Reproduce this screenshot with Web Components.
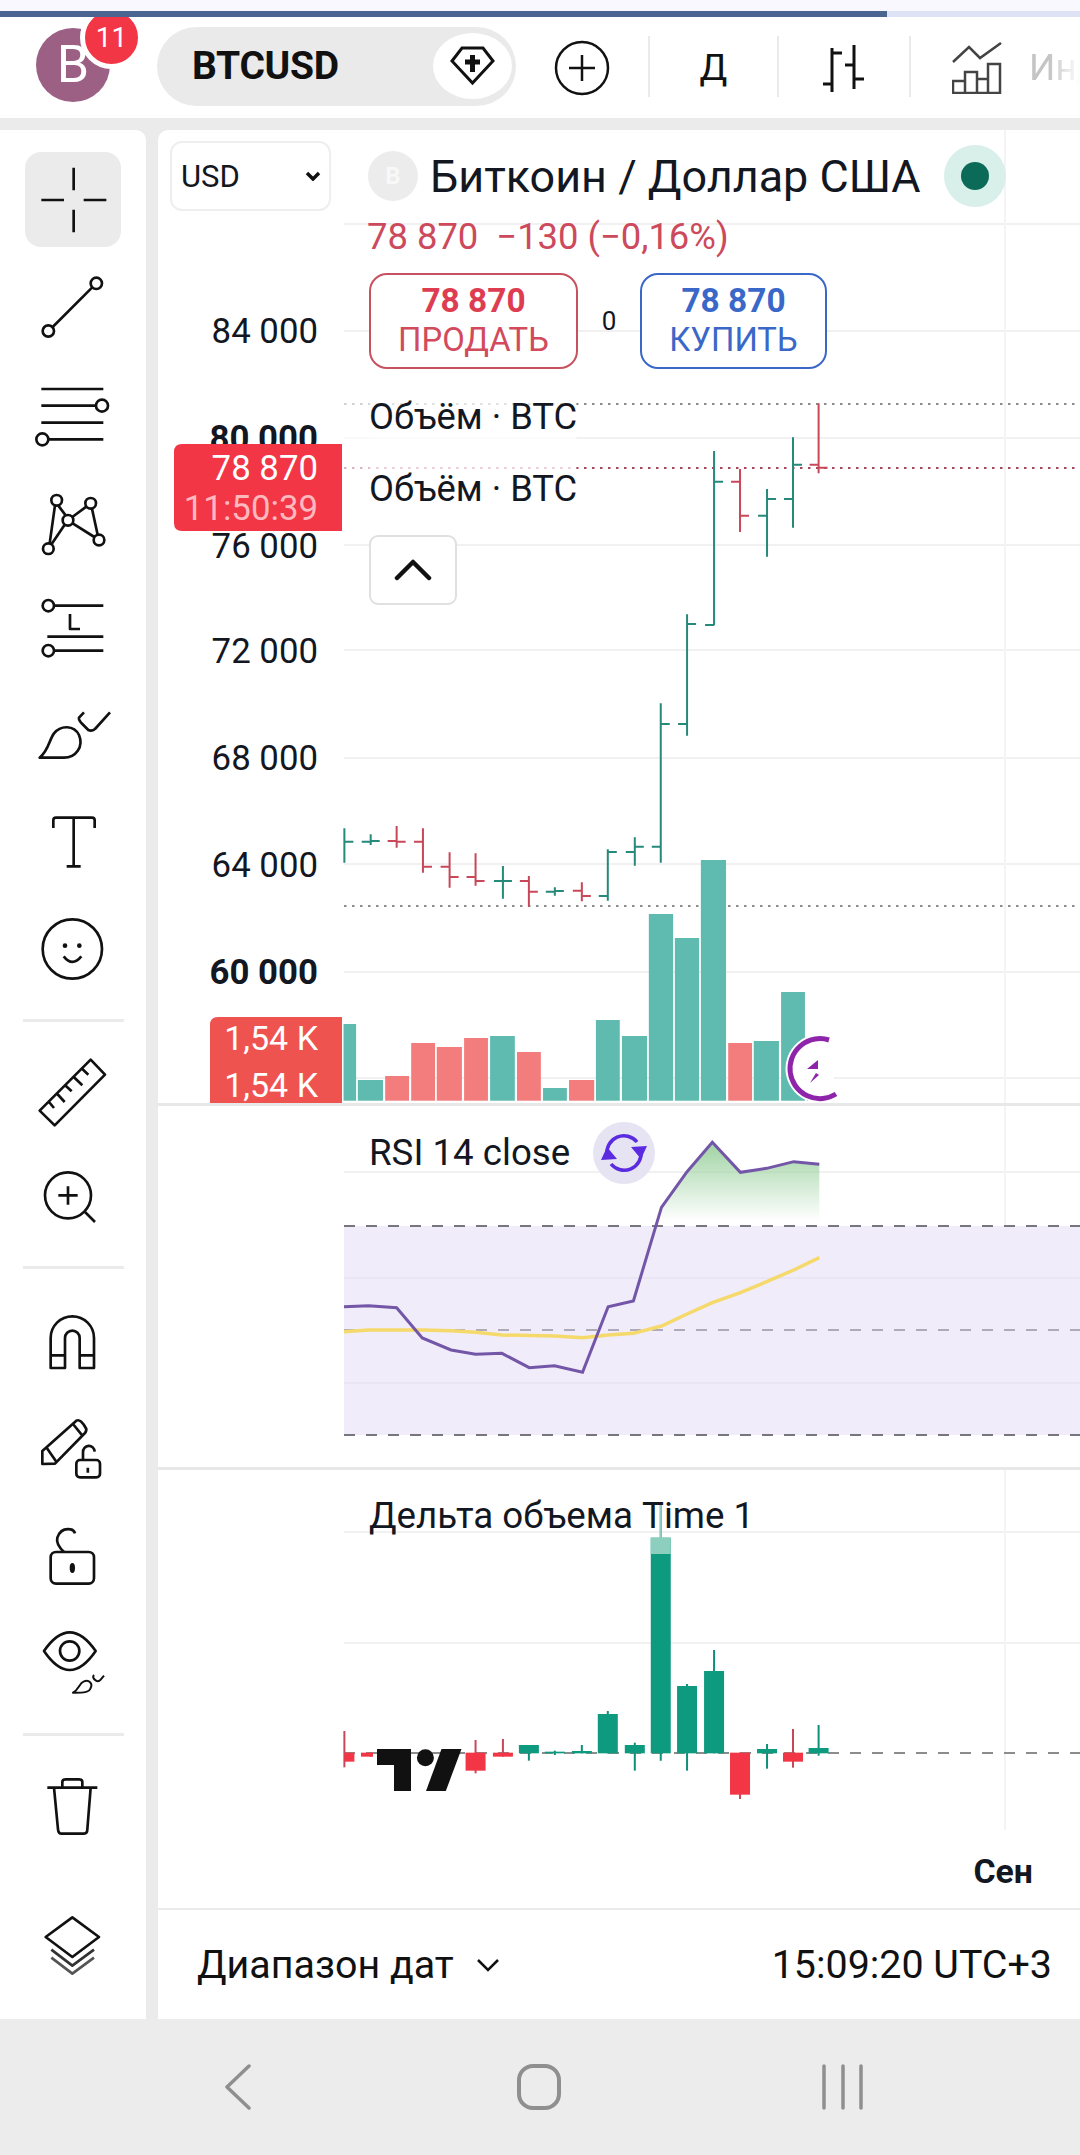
<!DOCTYPE html>
<html lang="ru">
<head>
<meta charset="utf-8">
<title>BTCUSD</title>
<style>
    html, body { margin: 0; padding: 0; background: #ebebeb; }
    body { width: 1080px; height: 2155px; overflow: hidden; font-family: Roboto, "Liberation Sans", sans-serif; color: #131722; }
</style>
</head>
<body>

<template id="tv-header-template">
    <style>
        :host { display: block; background: #fff; }
        .status { height: 11px; background: #f8f8fe; }
        .progress { height: 6px; background: #dde3f5; position: relative; z-index: 2; }
        .progress div { width: 887px; height: 100%; background: #4a6590; }
        .bar { height: 101px; display: flex; align-items: center; padding-left: 36px; overflow: hidden; position: relative; }
        .avatar { width: 74px; height: 74px; border-radius: 50%; background: #9c6085; color: #fff; font-size: 52px; font-weight: 400; display: flex; align-items: center; justify-content: center; margin-top: -6px; box-sizing: border-box; flex: none; }
        .badge { position: absolute; left: 81px; top: -10px; width: 53px; height: 53px; border-radius: 50%; background: #f23645; border: 5px solid #fff; color: #fff; font-size: 28px; display: flex; align-items: center; justify-content: center; box-sizing: content-box; margin: -1px; }
        .pill { width: 359px; height: 79px; margin-left: 47px; margin-top: -3px; border-radius: 40px; background: #eaeaea; display: flex; align-items: center; justify-content: space-between; padding: 0 4px 0 35px; box-sizing: border-box; flex: none; }
        .pill b { font-size: 39px; font-weight: 700; color: #111; letter-spacing: -.3px; }
        .gem { width: 79px; height: 66px; border-radius: 50%; background: #fff; display: flex; align-items: center; justify-content: center; }
        .plus { margin-left: 38px; flex: none; }
        .sep { width: 2px; height: 61px; background: #eaeaea; flex: none; margin-top: -2px; }
        .cell { display: flex; align-items: center; justify-content: center; flex: none; height: 100%; }
        .interval { font-size: 37px; font-weight: 400; color: #111; width: 127px; }
        .bars { width: 130px; }
        .ind { margin-left: 41px; flex: none; }
        .label { margin-left: 27px; font-size: 37px; white-space: nowrap; color: #c4c4c4; -webkit-mask-image: linear-gradient(90deg, #000 20px, transparent 51px); mask-image: linear-gradient(90deg, #000 20px, transparent 51px); width: 51px; overflow: hidden; flex: none; }
    </style>
    <div class="status"></div>
    <div class="progress"><div></div></div>
    <div class="bar">
        <div class="avatar">B</div>
        <div class="badge">11</div>
        <div class="pill">
            <b>BTCUSD</b>
            <div class="gem">
                <svg width="50" height="42" viewBox="0 0 50 42" fill="none" stroke="#111" stroke-width="3"><path d="M14 3H35L45 16 24.500 38 4 16Z"/><path d="M24.500 10V27M17 17H32" stroke-width="5"/></svg>
            </div>
        </div>
        <svg class="plus" width="56" height="56" viewBox="0 0 56 56" fill="none" stroke="#111" stroke-width="2.500"><circle cx="28" cy="28" r="26"/><path d="M28 15V41M15 28H41"/></svg>
        <div class="sep" style="margin-left:38px"></div>
        <div class="cell interval">Д</div>
        <div class="sep"></div>
        <div class="cell bars">
            <svg width="46" height="50" viewBox="0 0 46 50" fill="none" stroke="#111" stroke-width="3"><path d="M11 5V49M11 10H21M11 41H2M33 2V46M33 22H24M33 36H43"/></svg>
        </div>
        <div class="sep"></div>
        <svg class="ind" width="50" height="52" viewBox="0 0 50 52" fill="none" stroke="#444" stroke-width="2.500"><path d="M1 20L17 5 28 16 49 1"/><path d="M1 39H13V51H1ZM13 30H25V51H13ZM25 37H36V51H25ZM36 22H48V51H36Z"/></svg>
        <div class="label">Индикаторы</div>
    </div>
</template>

<template id="tv-tool-template">
    <style>
        :host { display: flex; align-items: center; justify-content: center; height: 107px; }
        :host([short]) { height: 104px; }
        .box { width: 96px; height: 95px; border-radius: 16px; display: flex; align-items: center; justify-content: center; }
        :host([active]) .box { background: #ebebeb; }
        ::slotted(svg) { width: 100px; height: 100px; flex: none; fill: none; stroke: #111; stroke-width: 8; stroke-linejoin: round; }
    </style>
    <div class="box"><slot></slot></div>
</template>

<template id="tv-toolbar-template">
    <style>
        :host { display: flex; flex-direction: column; width: 146px; background: #fff; border-top-right-radius: 10px; padding: 16px 0 21px; box-sizing: border-box; flex: none; }
        ::slotted(hr) { border: 0; height: 3px; width: 101px; margin: 17px auto 19px; background: #ebebeb; flex: none; }
        ::slotted(.end) { margin-top: auto; }
    </style>
    <slot></slot>
</template>

<template id="tv-legend-template">
    <style>
        :host { display: block; position: absolute; left: 0; top: 0; right: 0; }
        .row1 { display: flex; align-items: center; margin: 11px 0 0 12px; }
        .select { width: 161px; height: 70px; border: 2px solid #eeeeee; border-radius: 12px; box-sizing: border-box; display: flex; align-items: center; justify-content: space-between; padding: 0 8px 0 9px; font-size: 31px; background: #fff; }
        .logo { width: 50px; height: 50px; border-radius: 50%; background: #ececec; color: #f8f8f8; font-weight: 700; font-size: 24px; display: flex; align-items: center; justify-content: center; margin-left: 37px; flex: none; }
        .title { font-size: 44.900px; margin-left: 12px; white-space: nowrap; }
        .dot { width: 62px; height: 62px; border-radius: 50%; background: #d9efea; margin-left: 23px; display: flex; align-items: center; justify-content: center; flex: none; }
        .dot i { display: block; width: 28px; height: 28px; border-radius: 50%; background: #0b6b58; }
        .col { margin-left: 211px; display: flex; flex-direction: column; align-items: flex-start; }
        .change { margin-top: 4px; height: 44px; line-height: 44px; font-size: 36.400px; color: #cc4a5c; white-space: pre; margin-left: -2px; }
        .trade { margin-top: 14px; display: flex; align-items: center; }
        .zero { width: 62px; text-align: center; font-size: 26px; }
        .name { height: 44px; line-height: 44px; font-size: 36.300px; white-space: nowrap; background: rgba(255,255,255,.35); }
        .name.a { margin-top: 26px; }
        .name.b { margin-top: 28px; }
        .collapse { margin-top: 24px; width: 88px; height: 70px; border: 2px solid #e0e0e0; border-radius: 9px; box-sizing: border-box; display: flex; align-items: center; justify-content: center; background: #fff; }
    </style>
    <div class="row1">
        <div class="select">USD
            <svg width="16" height="10" viewBox="0 0 16 10" fill="none" stroke="#111" stroke-width="3.500"><path d="M2 2L8 8 14 2"/></svg>
        </div>
        <div class="logo">B</div>
        <div class="title">Биткоин / Доллар США</div>
        <div class="dot"><i></i></div>
    </div>
    <div class="col">
        <div class="change">78 870  −130 (−0,16%)</div>
        <div class="trade">
            <tv-trade-button side="sell" price="78 870" label="ПРОДАТЬ"></tv-trade-button>
            <div class="zero">0</div>
            <tv-trade-button side="buy" price="78 870" label="КУПИТЬ"></tv-trade-button>
        </div>
        <div class="name a">Объём · BTC</div>
        <div class="name b">Объём · BTC</div>
        <div class="collapse">
            <svg width="38" height="22" viewBox="0 0 38 22" fill="none" stroke="#111" stroke-width="4.500" stroke-linecap="round" stroke-linejoin="round"><path d="M3 19L19 3 35 19"/></svg>
        </div>
    </div>
</template>

<template id="tv-footer-template">
    <style>
        :host { display: flex; align-items: center; justify-content: space-between; height: 109px; padding: 0 28px 0 39px; border-top: 2px solid #ebebeb; box-sizing: content-box; font-size: 39.400px; color: #111; background: #fff; }
        .range { display: flex; align-items: center; gap: 22px; }
    </style>
    <div class="range">Диапазон дат
        <svg width="24" height="14" viewBox="0 0 24 14" fill="none" stroke="#111" stroke-width="2.500"><path d="M2 2L12 12 22 2"/></svg>
    </div>
    <div>15:09:20 UTC+3</div>
</template>

<template id="tv-nav-template">
    <style>
        :host { display: flex; align-items: center; height: 136px; padding-left: 224px; background: #ececec; flex: none; }
        svg { fill: none; stroke: #8f8f8f; flex: none; }
    </style>
    <svg width="28" height="46" viewBox="0 0 28 46" stroke-width="3.500" stroke-linecap="round" stroke-linejoin="round"><path d="M25 2L3 23 25 44"/></svg>
    <svg width="46" height="46" viewBox="0 0 46 46" stroke-width="4" style="margin-left:264px"><rect x="3" y="2" width="40" height="42" rx="14"/></svg>
    <svg width="42" height="46" viewBox="0 0 42 46" stroke-width="3.500" stroke-linecap="round" style="margin-left:260px"><path d="M2 2V44M21 2V44M39 2V44"/></svg>
</template>

<tv-app>
    <tv-header></tv-header>
    <tv-toolbar slot="toolbar">
        <tv-tool active><svg viewBox="72 62 300 300"><path d="M224 115V183M224 241V309M127 212H195M254 212H322"/></svg></tv-tool>
        <tv-tool><svg viewBox="72 378 300 300"><circle cx="148" cy="600" r="17"/><circle cx="292" cy="457" r="17"/><path d="M161 588L279 470"/></svg></tv-tool>
        <tv-tool><svg viewBox="72 695 300 300"><path d="M127 770H313M127 820H290M127 871H313M148 921H313"/><circle cx="309" cy="820" r="18"/><circle cx="130" cy="921" r="18"/></svg></tv-tool>
        <tv-tool><svg viewBox="72 1010 300 300"><circle cx="173" cy="1098" r="16"/><circle cx="275" cy="1107" r="16"/><circle cx="207" cy="1158" r="16"/><circle cx="300" cy="1217" r="16"/><circle cx="148" cy="1243" r="16"/><path d="M168 1113L152 1227M178 1114L200 1143M197 1171L158 1229M220 1148L262 1117M221 1167L286 1208M279 1123L296 1201"/></svg></tv-tool>
        <tv-tool><svg viewBox="72 85 300 300"><circle cx="148" cy="168" r="17"/><circle cx="148" cy="303" r="17"/><path d="M165 168H313M213 193V238H243M145 261H313M165 303H313"/></svg></tv-tool>
        <tv-tool><svg viewBox="72 405 300 300"><path d="M255 487L240 503Q238 510 250 522L268 540Q278 545 288 537L333 487"/><path d="M122 623C150 600 150 570 165 550C185 525 225 525 240 555C255 590 230 623 195 623Z"/></svg></tv-tool>
        <tv-tool><svg viewBox="72 720 300 300"><path d="M163 828V805Q163 797 171 797H279Q287 797 287 805V828M224 797V943M203 943H245"/></svg></tv-tool>
        <tv-tool><svg viewBox="72 1040 300 300"><circle cx="220" cy="1190" r="89"/><path d="M194 1212Q220 1245 247 1212"/><circle cx="198" cy="1180" r="7" style="fill:#111;stroke:none"/><circle cx="241" cy="1180" r="7" style="fill:#111;stroke:none"/></svg></tv-tool>
        <hr>
        <tv-tool short><svg viewBox="72 215 300 300"><path d="M275 265L318 310 167 462 122 418ZM150 392L165 410M175 368L197 392M200 343L218 360M225 318L250 342M250 293L268 310"/></svg></tv-tool>
        <tv-tool short><svg viewBox="72 527 300 300"><circle cx="207" cy="672" r="69"/><path d="M258 722L288 752M207 645V700M178 672H236"/></svg></tv-tool>
        <hr>
        <tv-tool><svg viewBox="72 960 300 300"><path d="M155 1188V1098A65 65 0 0 1 285 1098V1188H242V1098A22 22 0 0 0 198 1098V1188ZM155 1150H198M242 1150H285"/></svg></tv-tool>
        <tv-tool><svg viewBox="72 -150 300 300"><path d="M130 45V6L232 -85Q245 -92 262 -60Q262 -50 255 -45L168 44ZM143 -4L172 38M222 -75L252 -38"/><rect x="232" y="33" width="71" height="52" rx="11"/><path d="M252 33V10A17 18 0 0 1 287 8M266.500 56V71"/></svg></tv-tool>
        <tv-tool><svg viewBox="72 -150 300 300"><rect x="155" y="-12" width="130" height="95" rx="16"/><path d="M195 -12Q170 -35 175 -55Q185 -85 215 -80Q225 -78 228 -68"/><ellipse cx="220" cy="36" rx="8" ry="15" style="fill:#111;stroke:none"/></svg></tv-tool>
        <tv-tool><svg viewBox="72 -150 300 300"><path d="M135 -36Q212 -148 290 -36Q212 78 135 -36Z"/><circle cx="212" cy="-36" r="29"/><path d="M222 89C240 80 240 60 255 55C270 50 282 60 275 75C270 90 250 89 222 89ZM285 36Q278 44 290 52Q298 58 305 50L315 38" style="stroke-width:6"/></svg></tv-tool>
        <hr style="margin-bottom:16px">
        <tv-tool><svg viewBox="72 -150 300 300"><path d="M145 -55H295M190 -55V-72Q190 -80 200 -80H240Q250 -80 250 -72V-55M165 -55L177 70Q178 83 188 83H255Q265 83 265 70L275 -55"/></svg></tv-tool>
        <tv-tool class="end"><svg viewBox="72 -150 300 300"><path d="M220 -83L300 -24 220 36 140 -24Z"/><path d="M157 14L220 62 285 14" style="stroke:#333"/><path d="M157 38L220 86 285 38" style="stroke:#555"/></svg></tv-tool>
    </tv-toolbar>
    <tv-chart slot="chart"></tv-chart>
    <tv-nav slot="nav"></tv-nav>
</tv-app>

<script>
    const GRID = "#f1f1f1";
    const GRID_V = "#f4f4f4";
    const GREEN_BAR = "#26897a";
    const RED_BAR = "#c8485a";

    // coordinates in these panes are page pixels, the viewBox takes care of the origin
    function paneSvg(top, height, body) {
        return `<svg xmlns="http://www.w3.org/2000/svg" viewBox="158 ${top} 922 ${height}" width="922" height="${height}">${body}</svg>`;
    }

    function hline(y, color, extra) {
        return `<path d="M344 ${y}H1080" stroke="${color}" stroke-width="2" fill="none" ${extra || ""}/>`;
    }

    const barX = [41, 116, 190, 265, 341, 415, 493, 567, 641, 718, 792, 869, 943, 1018, 1095, 1169, 1246, 1320, 1393];
    const px = (z) => 330 + z / 2.851;
    const py = (z, top) => top + z / 3;

    // [high, low, open, close, up]
    const ohlc = [
        [1285, 1388, null, 1325, 1], [1303, 1335, 1325, 1323, 1], [1278, 1343, 1323, 1325, 0],
        [1285, 1418, 1325, 1400, 0], [1357, 1463, 1400, 1431, 0], [1360, 1457, 1431, 1443, 0],
        [1398, 1496, 1443, 1443, 1], [1428, 1520, 1443, 1475, 0], [1462, 1487, 1475, 1473, 1],
        [1447, 1504, 1472, 1488, 0], [1348, 1502, 1488, 1356, 1], [1312, 1397, 1356, 1340, 1],
        [910, 1388, 1340, 972, 1], [643, 1007, 972, 672, 1], [153, 676, 675, 245, 1],
        [207, 396, 245, 347, 0], [267, 470, 347, 297, 1], [112, 383, 297, 194, 1], [10, 220, 194, 203, 0]
    ];

    // volume bars, measured as left, right, top in the crop of the pane bottom
    const volumes = [
        [331, 360, 552, 1], [364, 422, 720, 1], [427, 482, 708, 0], [487, 542, 609, 0], [546, 604, 621, 0],
        [609, 664, 594, 0], [669, 726, 588, 1], [731, 786, 636, 0], [791, 846, 744, 1], [851, 909, 720, 0],
        [913, 968, 540, 1], [973, 1031, 588, 1], [1035, 1091, 222, 1], [1095, 1151, 294, 1], [1155, 1213, 60, 1],
        [1218, 1273, 609, 0], [1277, 1335, 603, 1], [1340, 1395, 456, 1]
    ];

    function mainPane() {
        let s = "";
        [224, 331, 438, 545, 650, 758, 864, 972, 1078].forEach((y) => { s += hline(y, GRID); });
        s += `<path d="M1005 130V1103" stroke="${GRID_V}" stroke-width="2"/>`;
        s += hline(404, "#8a8a8a", 'stroke-dasharray="2.500 5.500"');
        s += hline(906, "#8a8a8a", 'stroke-dasharray="2.500 5.500"');
        s += hline(468, "#a8455c", 'stroke-dasharray="2.500 5.500"');
        s += `<rect x="344" y="396" width="232" height="115" fill="#fff" opacity=".6"/>`;

        ohlc.forEach((b, i) => {
            const x = px(barX[i]);
            const c = b[4] ? GREEN_BAR : RED_BAR;
            let d = `M${x} ${py(b[0], 400)}V${py(b[1], 400)}`;
            if (b[2] !== null) d += `M${x} ${py(b[2], 400)}H${x - 9}`;
            d += `M${x} ${py(b[3], 400)}H${x + 9}`;
            s += `<path d="${d}" stroke="${c}" stroke-width="2" fill="none"/>`;
        });

        volumes.forEach((v) => {
            const l = 200 + v[0] / 2.306;
            const r = 200 + v[1] / 2.306;
            const t = 840 + v[2] / 3;
            s += `<rect x="${l}" y="${t}" width="${r - l}" height="${1100.7 - t}" fill="${v[3] ? "#5fbbb0" : "#f37d7d"}"/>`;
        });

        // pending alert marker over the last bars
        s += `<rect x="807" y="1097" width="24" height="4" fill="#f37d7d"/>`;
        s += `<path d="M829 1040A30 30 0 1 0 836 1094" fill="#fff" stroke="#fff" stroke-width="9"/>`;
        s += `<path d="M829 1040A30 30 0 1 0 836 1094" fill="none" stroke="#8e24aa" stroke-width="5"/>`;
        s += `<path d="M818 1060L807 1069H818ZM816 1073L810 1083 819 1075Z" fill="#8e24aa"/>`;

        const labels = [[84, 331, 400], [72, 651, 400], [68, 758, 400], [64, 865, 400], [60, 972, 700]];
        labels.forEach((l) => {
            s += `<text x="318" y="${l[1] + 12}" text-anchor="end" font-size="34.800" font-weight="${l[2]}" fill="#131722">${l[0]} 000</text>`;
        });
        s += `<text x="318" y="450" text-anchor="end" font-size="34.800" font-weight="700" fill="#131722">80 000</text>`;
        s += `<text x="318" y="557.500" text-anchor="end" font-size="34.800" fill="#131722">76 000</text>`;

        s += `<path d="M182 444H342V531H182Q174 531 174 523V452Q174 444 182 444Z" fill="#f23645"/>`;
        s += `<text x="318" y="480" text-anchor="end" font-size="34.800" fill="#fff">78 870</text>`;
        s += `<text x="318" y="520" text-anchor="end" font-size="34.800" fill="#ffb8be">11:50:39</text>`;

        s += `<path d="M218 1017H342V1063H210V1025Q210 1017 218 1017Z" fill="#ef5350"/>`;
        s += `<path d="M210 1063H342V1103H210Z" fill="#ef5350"/>`;
        s += `<text x="318" y="1050" text-anchor="end" font-size="34" fill="#fff">1,54 K</text>`;
        s += `<text x="318" y="1096.500" text-anchor="end" font-size="34" fill="#fff">1,54 K</text>`;
        return paneSvg(130, 973, s);
    }

    function polyline(points, top) {
        return points.map((p) => `${px(p[0])},${py(p[1], top)}`).join(" ");
    }

    function rsiPane() {
        const rsi = [[40, 590], [110, 587], [190, 593], [263, 684], [345, 720], [415, 733], [490, 730], [568, 773], [640, 767], [720, 787], [793, 590], [865, 573], [945, 292], [1018, 185], [1090, 97], [1170, 187], [1245, 175], [1322, 155], [1395, 163]];
        const ma = [[40, 665], [110, 660], [263, 660], [345, 662], [415, 667], [490, 675], [640, 678], [720, 683], [793, 675], [865, 670], [945, 648], [1018, 612], [1090, 578], [1170, 548], [1245, 515], [1322, 480], [1395, 443]];
        const area = rsi.slice(12);
        let s = `<defs><linearGradient id="over" x1="0" y1="0" x2="0" y2="1"><stop offset="0" stop-color="#9fd3a2"/><stop offset="1" stop-color="#9fd3a2" stop-opacity="0"/></linearGradient></defs>`;
        s += `<rect x="344" y="1226" width="736" height="209" fill="#f0ecf9"/>`;
        [1172, 1278, 1383].forEach((y) => { s += hline(y, y === 1172 ? GRID : "#e9e5f2"); });
        s += `<path d="M1005 1106V1226" stroke="${GRID_V}" stroke-width="2"/>`;
        s += hline(1226, "#77757e", 'stroke-dasharray="11 11"');
        s += hline(1330, "#aeaab8", 'stroke-dasharray="11 11"');
        s += hline(1435, "#77757e", 'stroke-dasharray="11 11"');
        s += `<polygon points="${polyline(area, 1110)} ${px(1395)},1221 ${px(945)},1221" fill="url(#over)"/>`;
        s += `<polyline points="${polyline(ma, 1110)}" fill="none" stroke="#f5d96b" stroke-width="3.500"/>`;
        s += `<polyline points="${polyline(rsi, 1110)}" fill="none" stroke="#7356a8" stroke-width="3"/>`;
        return paneSvg(1106, 361, s);
    }

    // [body top, body bottom, wick top, wick bottom, up]
    const deltas = [
        [818, 845, 753, 862, 0], [818, 830, 818, 830, 0], null, null, null,
        [818, 872, 780, 880, 0], [818, 830, 777, 830, 0], [795, 820, 795, 842, 1], [815, 820, 812, 825, 1],
        [813, 820, 795, 820, 1], [702, 820, 693, 820, 1], [795, 820, 788, 872, 1], [173, 820, 70, 842, 1],
        [618, 820, 612, 872, 1], [573, 820, 510, 820, 1], [818, 944, 818, 957, 0], [807, 820, 792, 866, 1],
        [818, 845, 747, 863, 0], [804, 820, 735, 827, 1]
    ];

    function deltaPane() {
        let s = hline(1532, GRID) + hline(1643, GRID);
        s += `<path d="M1005 1470V1830" stroke="${GRID_V}" stroke-width="2"/>`;
        s += hline(1753, "#8c8c8c", 'stroke-dasharray="11 11"');
        deltas.forEach((d, i) => {
            if (!d) return;
            const x = px(barX[i]);
            const c = d[4] ? "#0e9a7e" : "#f23645";
            let l = x - 10;
            let w = 20;
            if (i === 0) { l = x; w = 10; }
            if (i === 1) { l = 361; w = 12; }
            s += `<path d="M${x} ${py(d[2], 1480)}V${py(d[3], 1480)}" stroke="${d[4] ? "#0e8f78" : "#c8485a"}" stroke-width="2"/>`;
            s += `<rect x="${l}" y="${py(d[0], 1480)}" width="${w}" height="${(d[1] - d[0]) / 3}" fill="${c}"/>`;
        });
        // the legend fades the part of the tallest bar behind it
        s += `<path d="M${px(943) - 10} 1537.700H${px(943) + 10}V1554H${px(943) - 10}Z" fill="#8ccfbe"/>`;
        s += `<path d="M${px(943)} 1503V1538" stroke="#8ccfbe" stroke-width="2"/>`;
        // TradingView mark
        s += `<path d="M377 1749H411V1791H394V1765H377Z" fill="#111"/>`;
        s += `<ellipse cx="425.400" cy="1757.700" rx="8.500" ry="8.500" fill="#111"/>`;
        s += `<path d="M441.500 1749H461.500L445.800 1791H426Z" fill="#111"/>`;
        return paneSvg(1470, 360, s);
    }

    function define(name, templateId) {
        customElements.define(name, class extends HTMLElement {
            constructor() {
                super();
                this.attachShadow({mode: "open"}).appendChild(document.querySelector(templateId).content.cloneNode(true));
            }
        });
    }

    class TvTradeButton extends HTMLElement {
        constructor() {
            super();
            const sell = this.getAttribute("side") === "sell";
            this.attachShadow({mode: "open"}).innerHTML = `
                <style>
                    :host { display: flex; flex-direction: column; align-items: center; box-sizing: border-box; height: 96px; border-radius: 18px; padding-top: 7px;
                        width: ${sell ? 209 : 187}px; border: 2px solid ${sell ? "#c8515f" : "#3a68c9"}; color: ${sell ? "#d24a5b" : "#3a68c9"}; background: #fff; }
                    b { font-size: 33.400px; line-height: 38px; font-weight: 700; color: ${sell ? "#de3c50" : "#3a68c9"}; }
                    span { font-size: 32.800px; line-height: 40px; }
                </style>
                <b>${this.getAttribute("price")}</b><span>${this.getAttribute("label")}</span>`;
        }
    }
    customElements.define("tv-trade-button", TvTradeButton);

    class TvChart extends HTMLElement {
        constructor() {
            super();
            this.attachShadow({mode: "open"}).innerHTML = `
                <style>
                    :host { display: flex; flex-direction: column; flex: 1; min-width: 0; background: #fff; border-top-left-radius: 10px; overflow: hidden; }
                    .pane { display: block; position: relative; flex: none; overflow: hidden; }
                    .pane svg { display: block; font-family: Roboto, "Liberation Sans", sans-serif; }
                    .split { height: 3px; background: #e8e8e8; flex: none; }
                    .name { position: absolute; left: 211px; font-size: 36.700px; line-height: 44px; white-space: nowrap; color: #131722; }
                    .sync { position: absolute; left: 435px; top: 16px; }
                    .axis { height: 78px; flex: none; display: flex; justify-content: flex-end; align-items: center; padding-right: 47px; padding-top: 4px; box-sizing: border-box; font-size: 33.800px; font-weight: 700; color: #131722; }
                </style>
                <div class="pane" style="height:973px">${mainPane()}<tv-legend></tv-legend></div>
                <div class="split"></div>
                <div class="pane" style="height:361px">${rsiPane()}
                    <div class="name" style="top:25px">RSI 14 close</div>
                    <svg class="sync" width="62" height="62" viewBox="-31 -31 62 62"><circle r="31" fill="#e6e3f2"/>
                        <path d="M-17 2A17 17 0 0 1 13 -11M17 -2A17 17 0 0 1 -13 11" fill="none" stroke="#5a2be0" stroke-width="3.500"/>
                        <path d="M7 -6L23 -7 17 6ZM-7 6L-23 7 -17 -6Z" fill="#5a2be0"/></svg>
                </div>
                <div class="split"></div>
                <div class="pane" style="height:360px">${deltaPane()}
                    <div class="name" style="top:24px">Дельта объема Time 1</div>
                </div>
                <div class="axis">Сен</div>
                <tv-footer></tv-footer>`;
        }
    }

    class TvApp extends HTMLElement {
        constructor() {
            super();
            this.attachShadow({mode: "open"}).innerHTML = `
                <style>
                    :host { display: flex; flex-direction: column; width: 1080px; height: 2155px; }
                    .main { flex: 1; min-height: 0; display: flex; gap: 12px; margin-top: 12px; }
                </style>
                <slot></slot>
                <div class="main"><slot name="toolbar"></slot><slot name="chart"></slot></div>
                <slot name="nav"></slot>`;
        }
    }

    define("tv-header", "#tv-header-template");
    define("tv-tool", "#tv-tool-template");
    define("tv-toolbar", "#tv-toolbar-template");
    define("tv-legend", "#tv-legend-template");
    define("tv-footer", "#tv-footer-template");
    define("tv-nav", "#tv-nav-template");
    customElements.define("tv-chart", TvChart);
    customElements.define("tv-app", TvApp);
</script>
</body>
</html>
